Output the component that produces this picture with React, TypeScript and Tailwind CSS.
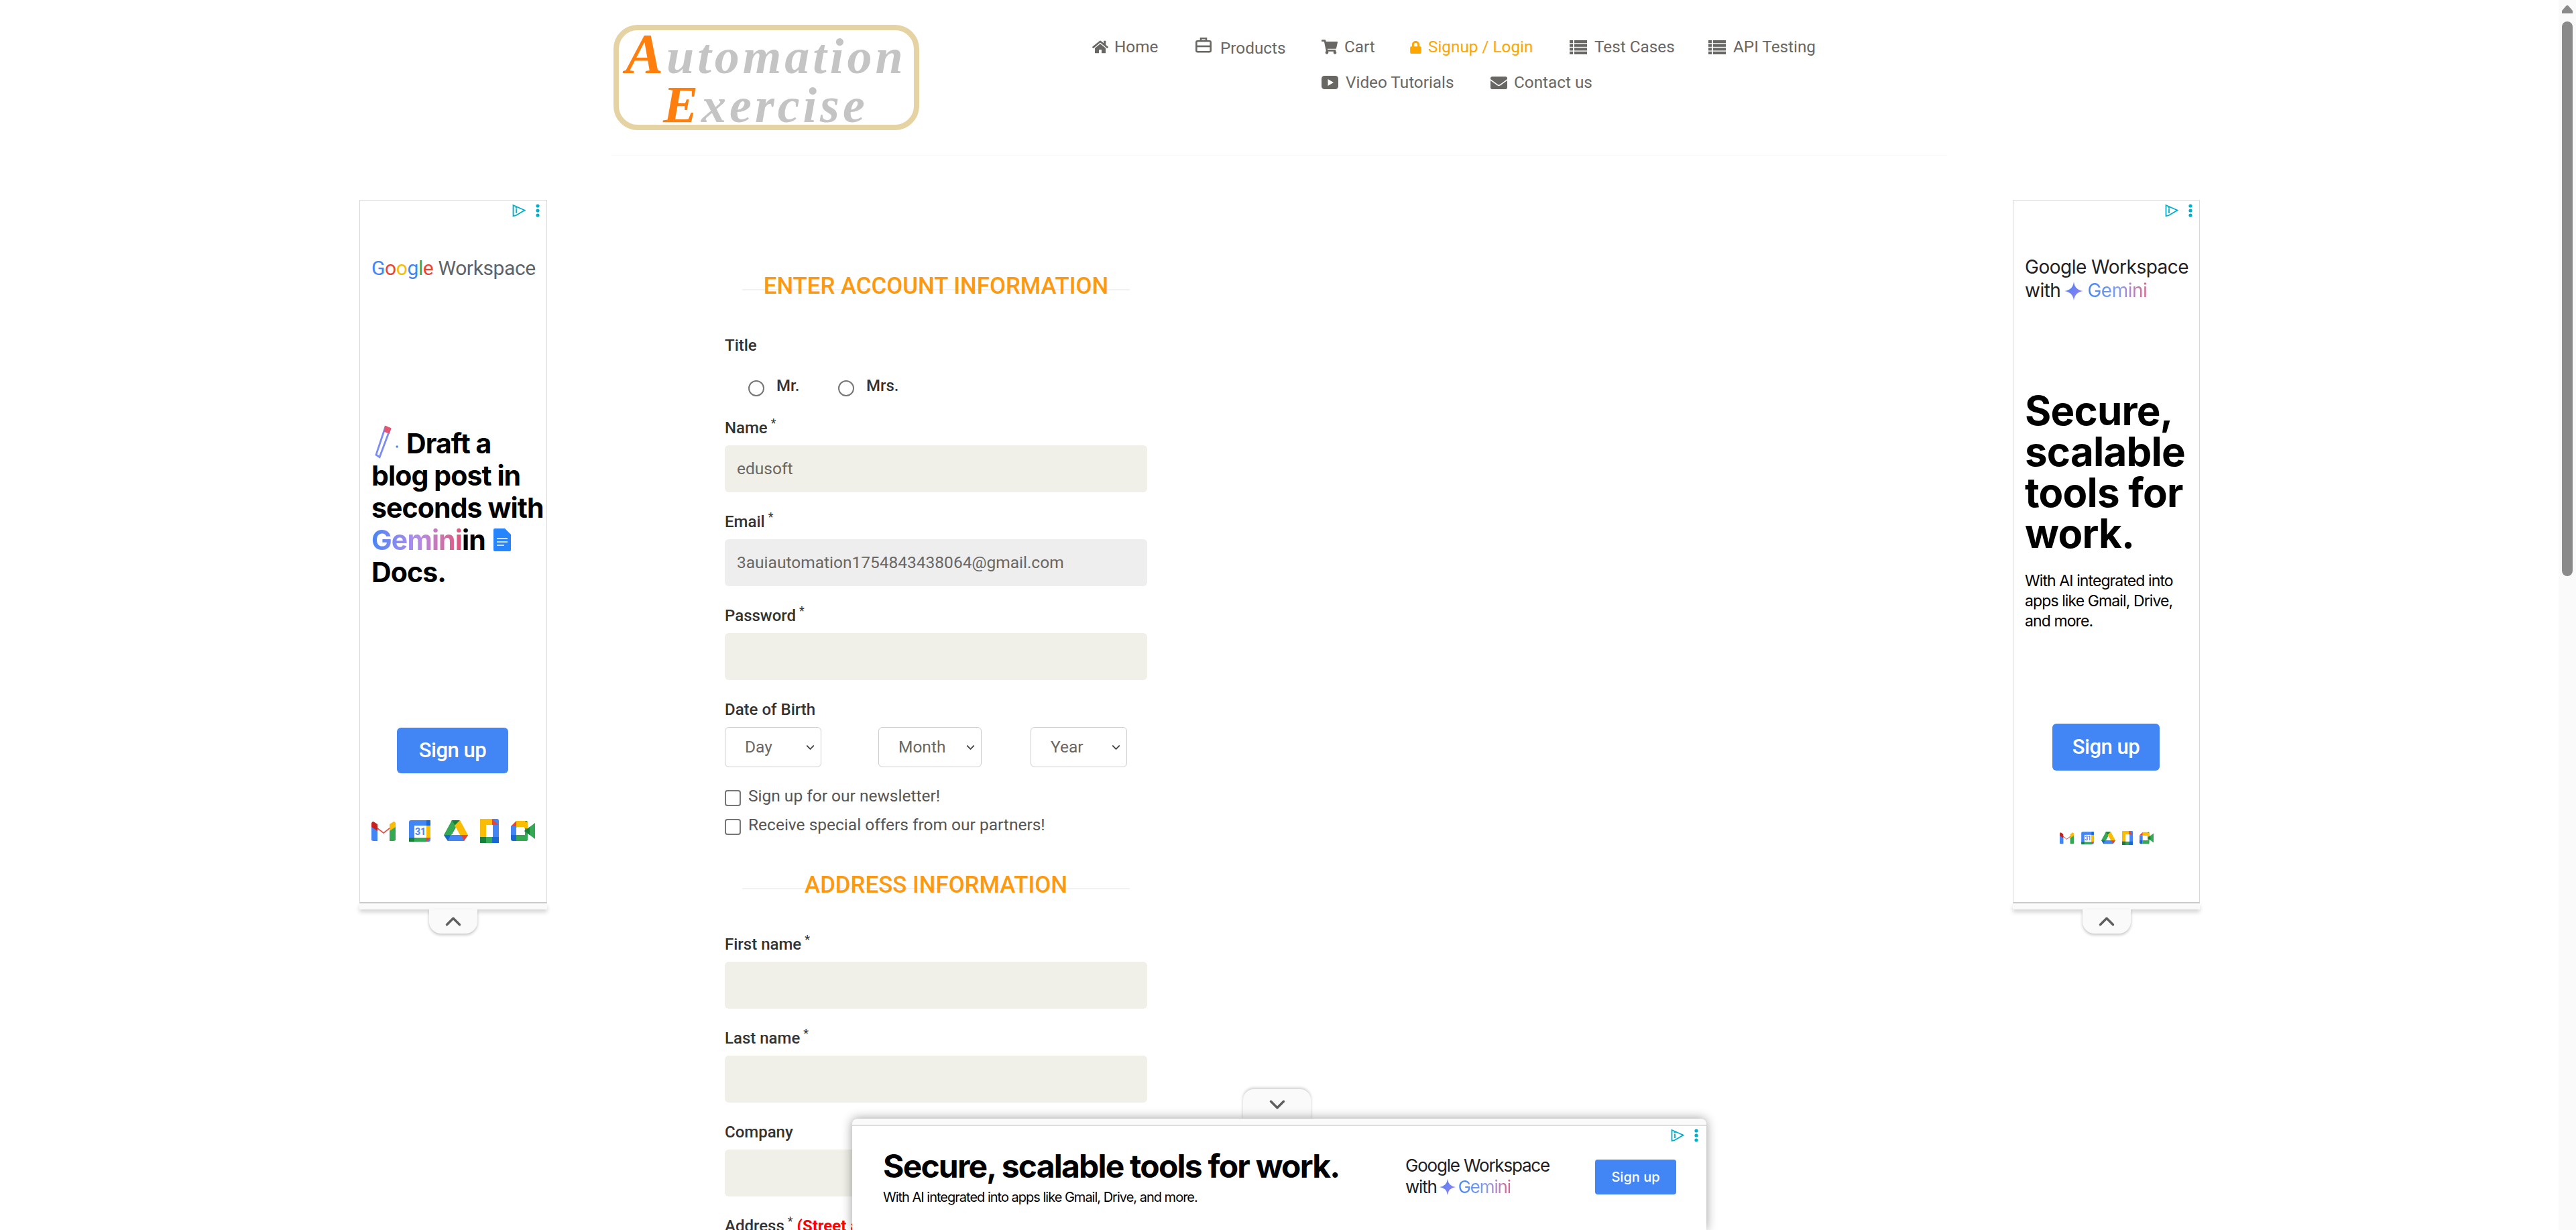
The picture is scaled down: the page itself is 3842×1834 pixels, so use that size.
import { FaHome, FaShoppingCart, FaLock, FaEnvelope } from 'react-icons/fa';
import { ChevronDown, ChevronUp } from 'lucide-react';
import type { ReactNode } from 'react';

const roboto = { fontFamily: 'Roboto, sans-serif' };

function BriefcaseIcon() {
  return (
    <svg width="24" height="24" viewBox="0 0 24 24" fill="none" stroke="currentColor" strokeWidth="2.6">
      <rect x="1.3" y="6.3" width="21.4" height="16" rx="2" />
      <path d="M8 6 V2.3 H16 V6" />
      <path d="M1 14 H23" />
    </svg>
  );
}

function ListIcon() {
  return (
    <svg width="26" height="21" viewBox="0 0 26 21" fill="currentColor">
      <rect x="0" y="0" width="5" height="4.2" />
      <rect x="7" y="0" width="19" height="4.2" />
      <rect x="0" y="5.6" width="5" height="4.2" />
      <rect x="7" y="5.6" width="19" height="4.2" />
      <rect x="0" y="11.2" width="5" height="4.2" />
      <rect x="7" y="11.2" width="19" height="4.2" />
      <rect x="0" y="16.8" width="5" height="4.2" />
      <rect x="7" y="16.8" width="19" height="4.2" />
    </svg>
  );
}

function VideoIcon() {
  return (
    <svg width="25" height="20" viewBox="0 0 25 20">
      <rect x="0" y="0" width="25" height="20" rx="4.5" fill="currentColor" />
      <path d="M9.5 5 L18 10 L9.5 15 Z" fill="#fff" />
    </svg>
  );
}

const navRowOne = [
  { label: 'Home', icon: <FaHome size={24} />, slot: 'w-[33px]', cls: 'w-[154px]' },
  { label: 'Products', icon: <span className="block mt-[-6px]"><BriefcaseIcon /></span>, slot: 'w-[37px]', cls: 'w-[188px]', text: 'pt-[3px]' },
  { label: 'Cart', icon: <FaShoppingCart size={24} />, slot: 'w-[34px]', cls: 'w-[131px]' },
  { label: 'Signup / Login', icon: <FaLock size={19} />, slot: 'w-[28px]', cls: 'w-[239px] text-[#ffa500]' },
  { label: 'Test Cases', icon: <ListIcon />, slot: 'w-[37px]', cls: 'w-[207px]' },
  { label: 'API Testing', icon: <ListIcon />, slot: 'w-[37px]', cls: 'w-[162px]' },
];

const navRowTwo = [
  { label: 'Video Tutorials', icon: <VideoIcon />, slot: 'w-[36px]', cls: 'w-[252px]' },
  { label: 'Contact us', icon: <FaEnvelope size={25} />, slot: 'w-[35px]', cls: 'w-[152px]' },
];

type NavProps = { label: string; icon: ReactNode; slot: string; cls: string; text?: string };

function NavItem({ label, icon, slot, cls, text }: NavProps) {
  return (
    <a className={`flex items-center text-[24.3px] leading-[28px] whitespace-nowrap ${cls}`}>
      <span className={`shrink-0 ${slot}`}>{icon}</span>
      <span className={text}>{label}</span>
    </a>
  );
}

function Logo() {
  return (
    <div className="w-[456px] h-[157px] mt-[37px] ml-[3px] border-[8px] border-[#e6d3a3] rounded-[36px] flex flex-col pl-[10px] font-['Liberation_Serif',serif] italic font-bold text-[#c4c4c4] text-[74px] leading-[72px] tracking-[5px]">
      <div className="whitespace-nowrap"><span className="text-[#ff7f0e] text-[84px]">A</span>utomation</div>
      <div className="pl-[56px] whitespace-nowrap"><span className="text-[#ff7f0e] text-[78px]">E</span>xercise</div>
    </div>
  );
}

function Field({ label, star = true, className = 'bg-[#f0f0e9]', value, mt = 'mt-[30px]' }: { label: string; star?: boolean; className?: string; value?: string; mt?: string }) {
  return (
    <div className={mt}>
      <div className="text-[24px] leading-[28px] font-medium text-[#333]">
        {label}{star && <sup className="ml-[5px] font-normal">*</sup>}
      </div>
      <div className={`mt-[12px] h-[70px] w-[630px] rounded-[6px] flex items-center pl-[18px] text-[24.5px] text-[#696763] ${className}`}>{value}</div>
    </div>
  );
}

function SectionTitle({ children, className }: { children: string; className: string }) {
  return (
    <div className={`relative w-[578px] ml-[26px] flex justify-center ${className}`}>
      <div className="absolute left-0 right-0 top-[26px] h-[2px] bg-[#f1f1f1]" />
      <h2 className="relative text-[34.8px] leading-[42px] font-medium text-[#fe980f] whitespace-nowrap">{children}</h2>
    </div>
  );
}

function DateSelect({ label, cls }: { label: string; cls: string }) {
  return (
    <div className={`h-[60px] rounded-[6px] border border-[#ccc] flex items-center justify-between pl-[29px] pr-[6px] text-[24.5px] text-[#696763] ${cls}`}>
      {label}
      <ChevronDown size={19} strokeWidth={2.4} className="text-[#444]" />
    </div>
  );
}

function Check({ label }: { label: string }) {
  return (
    <div className="flex items-center h-[24px] gap-[11px] text-[24.5px] text-[#555]">
      <span className="w-[24px] h-[24px] rounded-[4px] border-2 border-[#767676] bg-white shrink-0" />
      <span className="mt-[-6px]">{label}</span>
    </div>
  );
}

function AdChoices({ className }: { className: string }) {
  return (
    <div className={`absolute flex items-center gap-[15px] ${className}`}>
      <svg width="20" height="20" viewBox="0 0 20 20" fill="none" stroke="#00aecd" strokeWidth="1.8">
        <path d="M1.5 2 L18.5 9.5 L5 17.5 L1.5 18 Z" />
        <path d="M6 8 V14" />
        <circle cx="6" cy="5.5" r="0.6" />
      </svg>
      <svg width="6" height="20" viewBox="0 0 6 20" fill="#00aecd">
        <circle cx="3" cy="3" r="2.6" />
        <circle cx="3" cy="10" r="2.6" />
        <circle cx="3" cy="17" r="2.6" />
      </svg>
    </div>
  );
}

function ProductIcons({ size, gap }: { size: number; gap: number }) {
  return (
    <div className="flex items-center" style={{ gap }}>
      <svg width={size} height={size} viewBox="0 0 36 36">
        <path d="M0 6 L18 20 L36 6 V32 H27 V15 L18 22 L9 15 V32 H0 Z" fill="#ea4335" />
        <path d="M0 10 L9 16 V33 H3 Q0 33 0 30 Z" fill="#4285f4" />
        <path d="M36 10 L27 16 V33 H33 Q36 33 36 30 Z" fill="#34a853" />
        <path d="M27 8 L33 4 Q36 4 36 8 V12 L27 18 Z" fill="#fbbc04" />
        <path d="M9 8 L3 4 Q0 4 0 8 V12 L9 18 Z" fill="#c5221f" />
      </svg>
      <svg width={size} height={size} viewBox="0 0 36 36">
        <rect x="2" y="2" width="32" height="32" rx="3" fill="#4285f4" />
        <rect x="28" y="10" width="6" height="18" fill="#fbbc04" />
        <rect x="10" y="28" width="18" height="6" fill="#34a853" />
        <rect x="2" y="28" width="8" height="6" fill="#188038" />
        <rect x="28" y="2" width="6" height="8" fill="#1967d2" />
        <path d="M28 28 H34 L28 34 Z" fill="#ea4335" />
        <rect x="10" y="10" width="18" height="18" fill="#fff" />
        <text x="19" y="24" fontSize="14" fontWeight="700" textAnchor="middle" fill="#4285f4" fontFamily="Roboto, sans-serif">31</text>
      </svg>
      <svg width={size} height={size} viewBox="0 0 36 36">
        <path d="M12 2 H24 L12 23 L6 18 Z" fill="#188038" />
        <path d="M12 2 L0 24 L6 33 L18 12 Z" fill="#34a853" />
        <path d="M24 2 L36 24 H24 L16 10 Z" fill="#fbbc04" />
        <path d="M10 24 H36 L30 33 H6 Z" fill="#4285f4" />
        <path d="M0 24 H10 L6 33 Z" fill="#1967d2" />
        <path d="M26 24 H36 L30 33 Z" fill="#ea4335" />
        <path d="M18 13 L24 24 H12 Z" fill="#fff" />
      </svg>
      <svg width={size * 0.78} height={size} viewBox="0 0 28 36">
        <rect x="0" y="0" width="28" height="36" rx="3" fill="#4285f4" />
        <rect x="0" y="0" width="18" height="27" fill="#fbbc04" />
        <path d="M18 0 L28 9 H18 Z" fill="#ea4335" />
        <rect x="0" y="27" width="9" height="9" fill="#188038" />
        <rect x="9" y="27" width="9" height="9" fill="#34a853" />
        <rect x="18" y="27" width="10" height="9" fill="#1967d2" />
        <rect x="9" y="9" width="10" height="18" fill="#fff" />
      </svg>
      <svg width={size} height={size} viewBox="0 0 36 36">
        <path d="M8 3 H24 V13 H8 Z" fill="#fbbc04" />
        <path d="M8 3 L0 11 H8 Z" fill="#ea4335" />
        <rect x="0" y="11" width="8" height="13" fill="#4285f4" />
        <path d="M0 24 H8 V33 H3 Q0 33 0 30 Z" fill="#1967d2" />
        <rect x="8" y="24" width="16" height="9" fill="#34a853" />
        <rect x="21" y="3" width="4" height="30" rx="2" fill="#34a853" />
        <rect x="18" y="5" width="7" height="9" fill="#fbbc04" />
        <path d="M20 18 L36 6 V30 Z" fill="#34a853" />
        <path d="M20 18 L28 12 V24 Z" fill="#188038" />
        <rect x="9" y="12" width="11" height="12" fill="#fff" />
      </svg>
    </div>
  );
}

function GeminiStar({ size }: { size: number }) {
  return (
    <svg width={size} height={size} viewBox="0 0 28 28">
      <defs>
        <linearGradient id="star" x1="0" y1="0" x2="1" y2="1">
          <stop offset="0" stopColor="#4285f4" />
          <stop offset="1" stopColor="#a37ff0" />
        </linearGradient>
      </defs>
      <path d="M14 0 Q15.5 12.5 28 14 Q15.5 15.5 14 28 Q12.5 15.5 0 14 Q12.5 12.5 14 0 Z" fill="url(#star)" />
    </svg>
  );
}

function SideHandle() {
  return (
    <div className="absolute top-full left-1/2 -translate-x-1/2 w-[72px] h-[36px] bg-[#fafafa] rounded-b-[18px] shadow-[0_2px_4px_rgba(0,0,0,0.25)] flex items-center justify-center">
      <ChevronUp size={38} strokeWidth={2.2} className="text-[#5f5f5f]" />
    </div>
  );
}

const adFont = "font-['Inter',sans-serif]";

function LeftAd() {
  return (
    <div className={`fixed left-[536px] top-[298px] w-[280px] h-[1058px] flex flex-col ${adFont}`}>
      <div className="relative flex-1 bg-white border border-[#d8d8d8] border-b-2 border-b-[#ccc] pl-[17px]">
        <AdChoices className="top-[5px] right-[10px]" />
        <div className="mt-[84px] text-[30px] leading-[34px] whitespace-nowrap tracking-[-0.4px] font-['Roboto',sans-serif] text-[#5f6368]">
          <span className="text-[#4285f4]">G</span><span className="text-[#ea4335]">o</span><span className="text-[#fbbc04]">o</span><span className="text-[#4285f4]">g</span><span className="text-[#34a853]">l</span><span className="text-[#ea4335]">e</span> Workspace
        </div>
        <div className="mt-[216px] text-[41px] leading-[48px] font-bold text-black tracking-[-0.9px] whitespace-nowrap">
          <div className="flex items-end">
            <svg width="52" height="52" viewBox="0 0 30 30" fill="none">
              <path d="M12 2 L4 26 L7 28 L16 4 Z" fill="#fff" stroke="#7b8cf5" strokeWidth="1.6" />
              <path d="M12 1 L17 3 L15.5 8 L10.5 6 Z" fill="#e4566f" />
              <circle cx="22" cy="19" r="1" fill="#4285f4" />
            </svg>
            Draft a
          </div>
          <div>blog post in</div>
          <div>seconds with</div>
          <div className="flex items-center">
            <span className="bg-gradient-to-r from-[#4285f4] via-[#b08cec] to-[#e0527a] bg-clip-text text-transparent">Gemini</span>in
            <svg width="26" height="34" viewBox="0 0 26 34" className="ml-[12px]">
              <path d="M2 0 H17 L26 9 V32 Q26 34 24 34 H2 Q0 34 0 32 V2 Q0 0 2 0 Z" fill="#2684fc" />
              <path d="M5 15 H21 M5 20 H21 M5 25 H16" stroke="#fff" strokeWidth="1.6" />
            </svg>
          </div>
          <div>Docs.</div>
        </div>
        <div className="ml-[38px] mt-[208px] w-[166px] h-[68px] rounded-[6px] bg-[#4285f4] text-white text-[31px] font-medium flex items-center justify-center tracking-[-0.5px] font-['Roboto',sans-serif]">Sign up</div>
        <div className="mt-[68px]"><ProductIcons size={36} gap={18} /></div>
      </div>
      <div className="relative h-[9px] bg-[#fafafa] shadow-[0_4px_6px_rgba(0,0,0,0.18)]"><SideHandle /></div>
    </div>
  );
}

function RightAd() {
  return (
    <div className={`fixed left-[3002px] top-[298px] w-[279px] h-[1058px] flex flex-col ${adFont}`}>
      <div className="relative flex-1 bg-white border border-[#d8d8d8] border-b-2 border-b-[#ccc] pl-[17px]">
        <AdChoices className="top-[5px] right-[10px]" />
        <div className="mt-[82px] text-[28px] leading-[35px] text-[#202124] tracking-[-0.5px] whitespace-nowrap">
          <div>Google Workspace</div>
          <div className="flex items-center">with <span className="mx-[6px]"><GeminiStar size={28} /></span><span className="bg-gradient-to-r from-[#4285f4] via-[#7c9cf5] to-[#d9618f] bg-clip-text text-transparent">Gemini</span></div>
        </div>
        <div className="mt-[131px] text-[60px] leading-[61px] font-bold text-black tracking-[-0.8px] whitespace-nowrap">
          <div>Secure,</div>
          <div>scalable</div>
          <div>tools for</div>
          <div>work.</div>
        </div>
        <div className="mt-[25px] text-[23px] leading-[30px] text-black tracking-[-0.9px] whitespace-nowrap">
          <div>With AI integrated into</div>
          <div>apps like Gmail, Drive,</div>
          <div>and more.</div>
        </div>
        <div className="ml-[41px] mt-[138px] w-[160px] h-[70px] rounded-[6px] bg-[#4285f4] text-white text-[31px] font-medium flex items-center justify-center tracking-[-0.5px] font-['Roboto',sans-serif]">Sign up</div>
        <div className="mt-[90px] ml-[52px]"><ProductIcons size={21} gap={10} /></div>
      </div>
      <div className="relative h-[9px] bg-[#fafafa] shadow-[0_4px_6px_rgba(0,0,0,0.18)]"><SideHandle /></div>
    </div>
  );
}

function BottomAd() {
  return (
    <div className={`fixed left-[1271px] top-[1668px] w-[1274px] h-[166px] ${adFont}`}>
      <div className="absolute left-[583px] top-[-44px] w-[101px] h-[46px] bg-[#fafafa] rounded-t-[16px] shadow-[0_-2px_4px_rgba(0,0,0,0.2)] flex items-center justify-center">
        <ChevronDown size={38} strokeWidth={2.2} className="text-[#5f5f5f]" />
      </div>
      <div className="relative h-full rounded-t-[8px] bg-[#fafafa] pt-[9px] shadow-[0_0_16px_rgba(0,0,0,0.4)]">
        <div className="relative h-full bg-white border-t-2 border-[#ddd] flex">
          <AdChoices className="top-[4px] right-[12px]" />
          <div className="ml-[46px] mt-[32px] w-[779px]">
            <div className="text-[48px] leading-[56px] font-bold text-black tracking-[-1.8px] whitespace-nowrap">Secure, scalable tools for work.</div>
            <div className="mt-[5px] text-[20px] leading-[26px] text-black tracking-[-1px] whitespace-nowrap">With AI integrated into apps like Gmail, Drive, and more.</div>
          </div>
          <div className="mt-[43px] text-[26px] leading-[32px] text-[#202124] tracking-[-1.2px] whitespace-nowrap">
            <div>Google Workspace</div>
            <div className="flex items-center">with <span className="mx-[4px]"><GeminiStar size={24} /></span><span className="bg-gradient-to-r from-[#4285f4] via-[#7c9cf5] to-[#d9618f] bg-clip-text text-transparent">Gemini</span></div>
          </div>
          <div className="absolute left-[1108px] top-[50px] w-[121px] h-[52px] rounded-[4px] bg-[#4285f4] text-white text-[20px] font-medium flex items-center justify-center">Sign up</div>
        </div>
      </div>
    </div>
  );
}

function Scrollbar() {
  return (
    <div className="w-[26px] h-full bg-[#fafafa] flex flex-col items-center shrink-0">
      <svg width="16" height="12" viewBox="0 0 16 12" className="mt-[8px]">
        <path d="M8 0 Q9 0 10 1 L16 8 V12 H0 V8 L6 1 Q7 0 8 0 Z" fill="#8a8a8a" />
      </svg>
      <div className="mt-[12px] w-[16px] h-[827px] bg-[#8a8a8a] rounded-[8px]" />
    </div>
  );
}

export default function App() {
  return (
    <div className="h-[1834px] overflow-hidden flex bg-white" style={roboto}>
      <div className="flex-1 min-w-0">
        <header className="w-[1992px] h-[232px] mx-auto border-b border-[#f8f8f8] flex">
          <Logo />
          <nav className="ml-[258px] mt-[56px] text-[#696763]">
            <div className="flex h-[28px]">
              {navRowOne.map((n) => <NavItem key={n.label} {...n} />)}
            </div>
            <div className="flex mt-[25px] ml-[342px]">
              {navRowTwo.map((n) => <NavItem key={n.label} {...n} />)}
            </div>
          </nav>
        </header>

        <main className="ml-[1081px] w-[630px]">
          <SectionTitle className="mt-[173px]">ENTER ACCOUNT INFORMATION</SectionTitle>
          <div className="mt-[54px] text-[24px] leading-[28px] font-medium text-[#333]">Title</div>
          <div className="mt-[32px] flex text-[24px] leading-[28px] font-medium text-[#333]">
            <span className="w-[24px] h-[24px] ml-[35px] mt-[6px] rounded-full border-2 border-[#767676]" />
            <span className="ml-[18px] w-[92px]">Mr.</span>
            <span className="w-[24px] h-[24px] mt-[6px] rounded-full border-2 border-[#767676]" />
            <span className="ml-[18px]">Mrs.</span>
          </div>
          <Field label="Name" value="edusoft" mt="mt-[33px]" />
          <Field label="Email" value="3auiautomation1754843438064@gmail.com" className="bg-[#eeeeee]" />
          <Field label="Password" />

          <div className="mt-[30px] text-[24px] leading-[28px] font-medium text-[#333]">Date of Birth</div>
          <div className="mt-[12px] flex">
            <DateSelect label="Day" cls="w-[144px]" />
            <DateSelect label="Month" cls="w-[154px] ml-[85px]" />
            <DateSelect label="Year" cls="w-[144px] ml-[73px]" />
          </div>
          <div className="mt-[34px] flex flex-col gap-[19px]">
            <Check label="Sign up for our newsletter!" />
            <Check label="Receive special offers from our partners!" />
          </div>
          <SectionTitle className="mt-[53px]">ADDRESS INFORMATION</SectionTitle>
          <Field label="First name" mt="mt-[54px]" />
          <Field label="Last name" />
          <Field label="Company" star={false} />
          <div className="mt-[30px] text-[24px] leading-[28px] font-medium text-[#333] whitespace-nowrap">
            Address<sup className="ml-[5px] font-normal">*</sup> <span className="text-[#ff0000] font-bold">(Street address, P.O. Box, Company name, etc.)</span>
          </div>
        </main>
      </div>
      <Scrollbar />
      <LeftAd />
      <RightAd />
      <BottomAd />
    </div>
  );
}
